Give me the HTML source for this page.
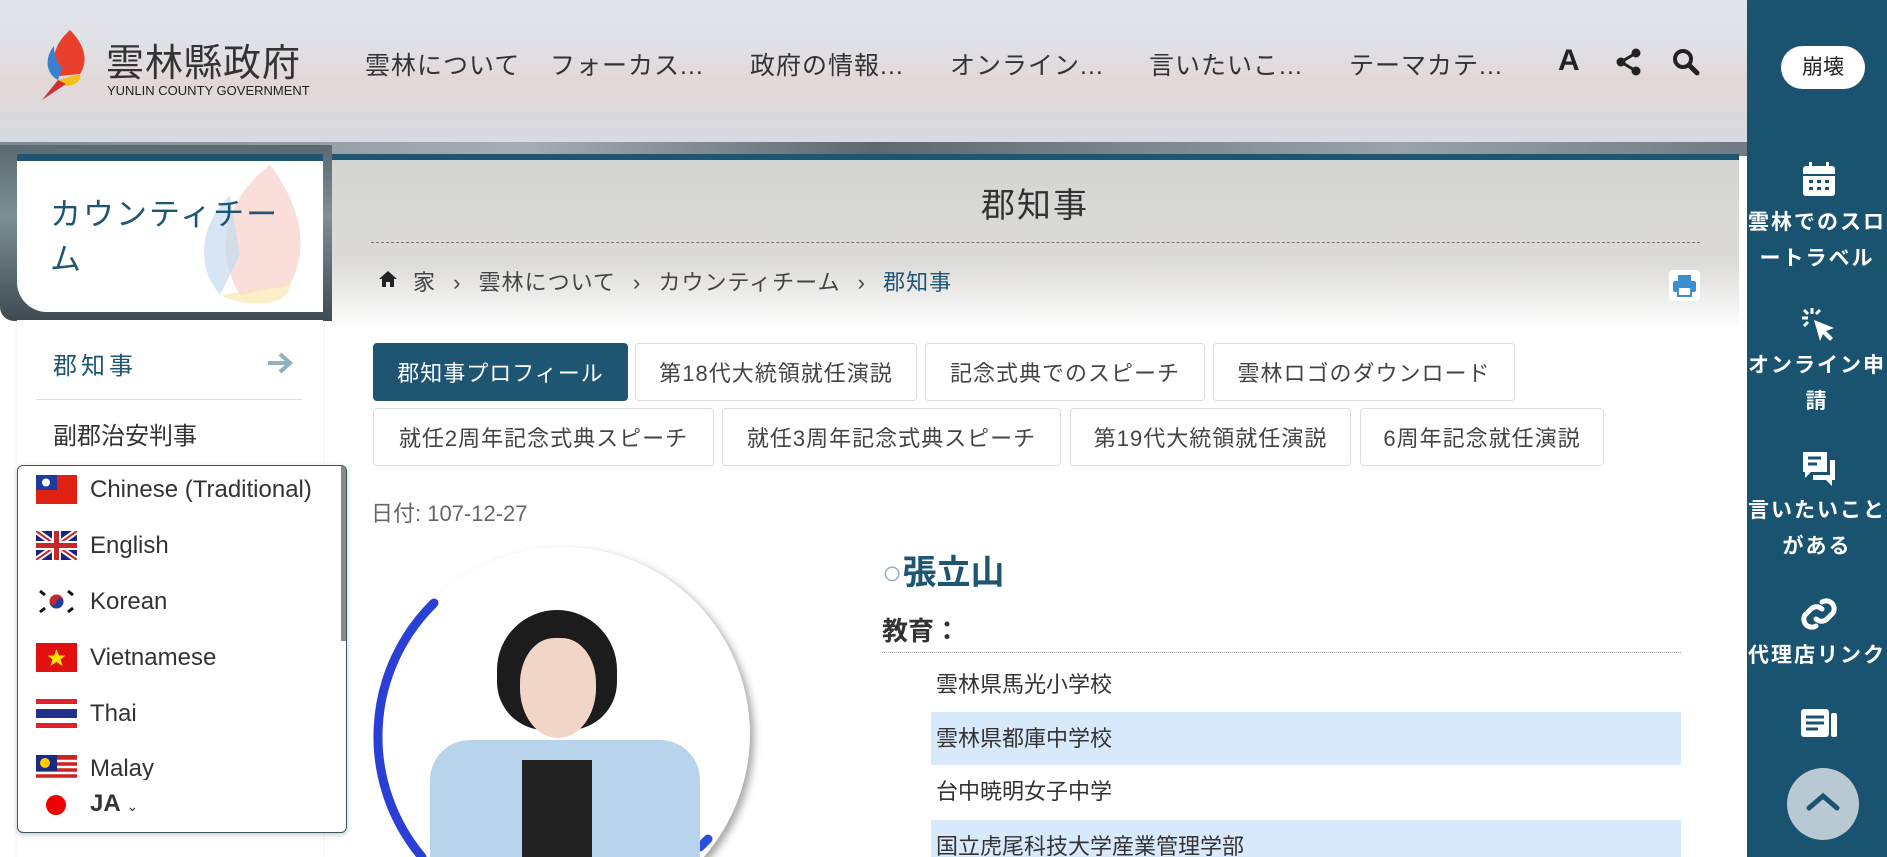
<!DOCTYPE html>
<html><head><meta charset="utf-8">
<style>
*{margin:0;padding:0;box-sizing:border-box}
html,body{width:1887px;height:857px;overflow:hidden}
body{background:#fff;font-family:"Liberation Sans","Noto Sans CJK JP",sans-serif;color:#333}
#root{position:relative;width:1887px;height:857px;overflow:hidden}
.a{position:absolute;white-space:nowrap}
#hdr{left:0;top:0;width:1747px;height:145px;background:linear-gradient(180deg,#e4e5ea 0%,#dfe1e6 30%,#e3d8d8 55%,#d6dae2 100%)}
#strip{left:0;top:142px;width:1747px;height:14px;background:linear-gradient(90deg,#7d8a94,#a6adb4 30%,#5d6870 50%,#9aa3aa 80%,#6f7a82)}
#leftbg{left:0;top:145px;width:332px;height:176px;background:linear-gradient(180deg,#5a6a70,#7d8f94 40%,#3e4c52);border-radius:0 0 0 14px}
#card{left:17px;top:154px;width:306px;height:158px;background:#fff;border-top:7px solid #1d5572;border-radius:0 0 0 30px}
#maingrad{left:332px;top:160px;width:1407px;height:170px;background:linear-gradient(180deg,#d5d5d3 0%,#dcdbd9 60%,#fff 100%)}
#side{left:1747px;top:0;width:140px;height:857px;background:#19536f}
.nav{top:46px;font-size:25px;color:#333;letter-spacing:1px}
.tab{position:absolute;height:58px;border:1px solid #ddd;border-radius:4px;background:#fff;font-size:22px;color:#444;display:flex;align-items:center;justify-content:center;letter-spacing:1px}
.si{position:absolute;left:1747px;width:140px;text-align:center;color:#fff;font-size:21px;font-weight:bold;letter-spacing:2px;line-height:36px;overflow:hidden}
.lang{position:absolute;left:36px;font-size:24px;color:#333;display:flex;align-items:center;gap:13px}
.flag{width:41px;height:29px;display:inline-block}
.li{position:absolute;left:931px;width:750px;height:53px;font-size:22px;color:#333;padding-left:5px;line-height:53px}
</style></head><body><div id="root">
<div class="a" id="hdr"></div>
<div class="a" id="strip"></div>
<div class="a" id="leftbg"></div>
<div class="a" id="card"></div>
<div class="a" id="maingrad"></div>
<div class="a" style="left:332px;top:154px;width:1407px;height:6px;background:#1d5572"></div>
<div class="a" style="left:332px;top:330px;width:1407px;height:527px;background:#fff"></div>
<div class="a" style="left:17px;top:320px;width:306px;height:537px;background:#fff;box-shadow:0 0 4px rgba(0,0,0,.08)"></div>

<!-- logo -->
<svg class="a" style="left:40px;top:28px" width="62" height="74" viewBox="0 0 62 74">
<path d="M30 2 C14 16 8 36 20 48 L40 46 C48 34 46 18 30 2Z" fill="#e8402a"/>
<path d="M14 18 C4 30 6 46 18 52 L22 40 C16 34 14 26 14 18Z" fill="#3a7fd0"/>
<path d="M18 52 L40 46 C42 52 36 58 26 58 Z" fill="#f0c020"/>
<path d="M26 56 L2 72 L18 52Z" fill="#d03030"/>
</svg>
<div class="a" style="left:106px;top:32px;font-size:38px;color:#333;letter-spacing:1px">雲林縣政府</div>
<div class="a" style="left:107px;top:83px;font-size:13px;color:#222">YUNLIN COUNTY GOVERNMENT</div>

<div class="a nav" style="left:365px">雲林について</div>
<div class="a nav" style="left:550px">フォーカス...</div>
<div class="a nav" style="left:750px">政府の情報...</div>
<div class="a nav" style="left:950px">オンライン...</div>
<div class="a nav" style="left:1149px">言いたいこ...</div>
<div class="a nav" style="left:1349px">テーマカテ...</div>
<div class="a" style="left:1558px;top:44px;font-size:30px;font-weight:bold;color:#222">A</div>
<svg class="a" style="left:1616px;top:48px" width="26" height="28" viewBox="0 0 26 28"><circle cx="20" cy="5" r="4.5" fill="#222"/><circle cx="5" cy="14" r="4.5" fill="#222"/><circle cx="20" cy="23" r="4.5" fill="#222"/><path d="M20 5L5 14L20 23" stroke="#222" stroke-width="3" fill="none"/></svg>
<svg class="a" style="left:1672px;top:48px" width="28" height="28" viewBox="0 0 28 28"><circle cx="11" cy="11" r="8" stroke="#222" stroke-width="4" fill="none"/><path d="M17 17L25 25" stroke="#222" stroke-width="5" stroke-linecap="round"/></svg>

<!-- side -->
<div class="a" id="side"></div>
<div class="a" style="left:1781px;top:46px;width:84px;height:43px;background:#fff;border-radius:22px;font-size:21px;color:#222;text-align:center;line-height:43px">崩壊</div>
<svg class="a" style="left:1801px;top:162px" width="36" height="36" viewBox="0 0 36 36"><rect x="2" y="4" width="32" height="30" rx="3" fill="#fff"/><rect x="2" y="12" width="32" height="2" fill="#19536f"/><g fill="#19536f"><rect x="8" y="18" width="4" height="3"/><rect x="16" y="18" width="4" height="3"/><rect x="24" y="18" width="4" height="3"/><rect x="8" y="25" width="4" height="3"/><rect x="16" y="25" width="4" height="3"/><rect x="24" y="25" width="4" height="3"/></g><rect x="8" y="0" width="3" height="7" fill="#fff"/><rect x="25" y="0" width="3" height="7" fill="#fff"/></svg>
<div class="si" style="top:205px">雲林でのスロ<br>ートラベル</div>
<svg class="a" style="left:1800px;top:306px" width="38" height="38" viewBox="0 0 38 38"><path d="M14 14L34 22L26 25L33 32L30 35L23 28L20 35Z" fill="#fff"/><path d="M12 2V8M2 12H8M4 4L8 8M20 4L16 8M4 20L8 16" stroke="#fff" stroke-width="3"/></svg>
<div class="si" style="top:348px">オンライン申<br>請</div>
<svg class="a" style="left:1801px;top:450px" width="36" height="38" viewBox="0 0 36 38"><path d="M2 2H26V22H10L4 28V22H2Z" fill="#fff"/><path d="M29 10H34V30H31V36L25 30H12V25H29Z" fill="#fff"/><path d="M7 8H20M7 14H16" stroke="#19536f" stroke-width="3"/></svg>
<div class="si" style="top:493px">言いたいこと<br>がある</div>
<svg class="a" style="left:1800px;top:596px" width="38" height="36" viewBox="0 0 38 36"><path d="M22 6a8 8 0 0 1 11 11l-6 6a8 8 0 0 1-11 0M16 30a8 8 0 0 1-11-11l6-6a8 8 0 0 1 11 0" stroke="#fff" stroke-width="5" fill="none" stroke-linecap="round"/></svg>
<div class="si" style="top:638px">代理店リンク</div>
<svg class="a" style="left:1800px;top:708px" width="38" height="30" viewBox="0 0 38 30"><rect x="1" y="1" width="28" height="28" rx="3" fill="#fff"/><rect x="31" y="5" width="6" height="24" rx="2" fill="#fff"/><path d="M6 9H24M6 15H24M6 21H18" stroke="#19536f" stroke-width="3"/></svg>
<div class="a" style="left:1787px;top:768px;width:72px;height:72px;border-radius:50%;background:#b8c9d3"></div>
<svg class="a" style="left:1805px;top:790px" width="36" height="24" viewBox="0 0 36 24"><path d="M4 18L18 6L32 18" stroke="#19536f" stroke-width="5" fill="none" stroke-linecap="round"/></svg>

<!-- card -->
<svg class="a" style="left:190px;top:165px" width="125" height="145" viewBox="0 0 125 145"><path d="M80 0C40 30 20 80 50 130L100 120C120 80 110 40 80 0Z" fill="#f5c8c0" opacity=".6"/><path d="M40 30C10 60 5 100 30 130L50 90Z" fill="#c8daf0" opacity=".7"/><path d="M30 130L100 120C100 140 60 145 30 130Z" fill="#f8e8b0" opacity=".7"/></svg>
<div class="a" style="left:50px;top:192px;font-size:31px;color:#1d5572;line-height:45px;letter-spacing:2px">カウンティチー<br>ム</div>

<div class="a" style="left:53px;top:346px;font-size:24px;color:#1d5572;letter-spacing:4px">郡知事</div>
<svg class="a" style="left:266px;top:351px" width="28" height="24" viewBox="0 0 28 24"><path d="M2 12H24M14 3L24 12L14 21" stroke="#8fb0be" stroke-width="4" fill="none"/></svg>
<div class="a" style="left:36px;top:399px;width:266px;height:1px;background:#ddd"></div>
<div class="a" style="left:53px;top:416px;font-size:24px;color:#333">副郡治安判事</div>

<!-- title -->
<div class="a" style="left:0;width:2070px;text-align:center;top:178px;font-size:34px;color:#333;letter-spacing:2px">郡知事</div>
<div class="a" style="left:371px;top:242px;width:1329px;border-top:1px dashed #777"></div>
<svg class="a" style="left:378px;top:270px" width="20" height="18" viewBox="0 0 20 18"><path d="M10 1L1 9H4V17H8V12H12V17H16V9H19Z" fill="#222"/></svg>
<div class="a" style="left:413px;top:265px;font-size:22px;color:#444;letter-spacing:1px">家 <span style="margin:0 10px">›</span> 雲林について <span style="margin:0 10px">›</span> カウンティチーム <span style="margin:0 10px">›</span> <span style="color:#1d5572">郡知事</span></div>
<div class="a" style="left:1669px;top:270px;width:31px;height:31px;background:#fff;border-radius:4px"></div>
<svg class="a" style="left:1672px;top:273px" width="25" height="25" viewBox="0 0 25 25"><rect x="6" y="2" width="13" height="6" fill="#3d8ed0"/><rect x="1" y="8" width="23" height="11" rx="2" fill="#3d8ed0"/><rect x="6" y="14" width="13" height="9" fill="#fff" stroke="#3d8ed0" stroke-width="2"/></svg>

<!-- tabs -->
<div class="tab" style="left:373px;top:343px;width:255px;background:#1d5572;color:#fff;border-color:#1d5572">郡知事プロフィール</div>
<div class="tab" style="left:635px;top:343px;width:282px">第18代大統領就任演説</div>
<div class="tab" style="left:925px;top:343px;width:280px">記念式典でのスピーチ</div>
<div class="tab" style="left:1213px;top:343px;width:302px">雲林ロゴのダウンロード</div>
<div class="tab" style="left:373px;top:408px;width:341px">就任2周年記念式典スピーチ</div>
<div class="tab" style="left:722px;top:408px;width:339px">就任3周年記念式典スピーチ</div>
<div class="tab" style="left:1070px;top:408px;width:281px">第19代大統領就任演説</div>
<div class="tab" style="left:1360px;top:408px;width:244px">6周年記念就任演説</div>

<div class="a" style="left:371px;top:496px;font-size:22px;color:#666">日付: 107-12-27</div>

<!-- photo -->
<div class="a" style="left:376px;top:547px;width:374px;height:374px;border-radius:50%;background:#fff;box-shadow:4px 4px 8px rgba(0,0,0,.35)"></div>
<svg class="a" style="left:370px;top:541px" width="386" height="316" viewBox="0 0 386 316"><path d="M64 62 A187 187 0 0 0 52 316" stroke="#2a3fd6" stroke-width="9" fill="none" stroke-linecap="round"/><path d="M330 306 l8 -8" stroke="#2a4fd8" stroke-width="9" stroke-linecap="round"/></svg>
<div class="a" style="left:430px;top:740px;width:270px;height:117px;background:#b8d4ec;border-radius:40px 40px 0 0"></div>
<div class="a" style="left:522px;top:760px;width:70px;height:97px;background:#222"></div>
<div class="a" style="left:497px;top:610px;width:120px;height:120px;background:#1c1c1c;border-radius:50% 50% 40% 40%"></div>
<div class="a" style="left:520px;top:638px;width:76px;height:100px;background:#f1d6c8;border-radius:45% 45% 50% 50%"></div>

<!-- profile -->
<div class="a" style="left:882px;top:545px;font-size:34px;color:#1d5572;font-weight:bold"><span style="color:#9ab;font-weight:normal">○</span>張立山</div>
<div class="a" style="left:882px;top:611px;font-size:26px;color:#333;font-weight:bold">教育：</div>
<div class="a" style="left:882px;top:652px;width:799px;border-top:1px dotted #aaa"></div>
<div class="li" style="top:658px">雲林県馬光小学校</div>
<div class="li" style="top:712px;background:#d8e9fb">雲林県都庫中学校</div>
<div class="li" style="top:765px">台中暁明女子中学</div>
<div class="li" style="top:820px;background:#d8e9fb">国立虎尾科技大学産業管理学部</div>

<!-- dropdown -->
<div class="a" style="left:17px;top:465px;width:330px;height:368px;background:#fff;border:1px solid #3a5560;border-radius:6px;box-shadow:0 2px 6px rgba(0,0,0,.2);overflow:hidden">
<div style="position:absolute;left:323px;top:0;width:5px;height:175px;background:#888"></div>
</div>
<div class="lang" style="top:475px"><svg class="flag" viewBox="0 0 41 29"><rect width="41" height="29" fill="#e02010"/><rect width="21" height="15" fill="#1e3aa0"/><circle cx="10" cy="7.5" r="4" fill="#fff"/></svg>Chinese (Traditional)</div>
<div class="lang" style="top:531px"><svg class="flag" viewBox="0 0 41 29"><rect width="41" height="29" fill="#1a237e"/><path d="M0 0L41 29M41 0L0 29" stroke="#fff" stroke-width="6"/><path d="M0 0L41 29M41 0L0 29" stroke="#c62828" stroke-width="2"/><path d="M20.5 0V29M0 14.5H41" stroke="#fff" stroke-width="9"/><path d="M20.5 0V29M0 14.5H41" stroke="#c62828" stroke-width="5"/></svg>English</div>
<div class="lang" style="top:587px"><svg class="flag" viewBox="0 0 41 29"><rect width="41" height="29" fill="#fff"/><circle cx="20.5" cy="14.5" r="7" fill="#c62828"/><path d="M13.5 14.5a7 7 0 0 0 14 0a3.5 3.5 0 0 0-7 0a3.5 3.5 0 0 1-7 0" fill="#1e40a0"/><path d="M4 4l5 4M32 4l5 4M4 25l5-4M32 25l5-4" stroke="#111" stroke-width="3"/></svg>Korean</div>
<div class="lang" style="top:643px"><svg class="flag" viewBox="0 0 41 29"><rect width="41" height="29" fill="#e21010"/><path d="M20.5 6L23 12.5H29.5L24.5 16.5L26.5 23L20.5 19L14.5 23L16.5 16.5L11.5 12.5H18Z" fill="#ffe000"/></svg>Vietnamese</div>
<div class="lang" style="top:699px"><svg class="flag" viewBox="0 0 41 29"><rect width="41" height="29" fill="#e0202a"/><rect y="5" width="41" height="19" fill="#fff"/><rect y="10" width="41" height="9" fill="#22318a"/></svg>Thai</div>
<div class="lang" style="top:755px;height:25px;overflow:hidden;align-items:flex-start"><svg class="flag" viewBox="0 0 41 29"><rect width="41" height="29" fill="#d02020"/><path d="M0 6H41M0 12H41M0 18H41M0 24H41" stroke="#fff" stroke-width="2.5"/><rect width="21" height="16" fill="#1a2a80"/><circle cx="9" cy="8" r="5" fill="#ffcc00"/></svg>Malay</div>
<div class="a" style="left:46px;top:795px;width:20px;height:20px;border-radius:50%;background:#e00"></div>
<div class="a" style="left:90px;top:790px;font-size:24px;font-weight:bold;color:#333">JA <span style="font-size:14px;font-weight:normal">⌄</span></div>
</div></body></html>
